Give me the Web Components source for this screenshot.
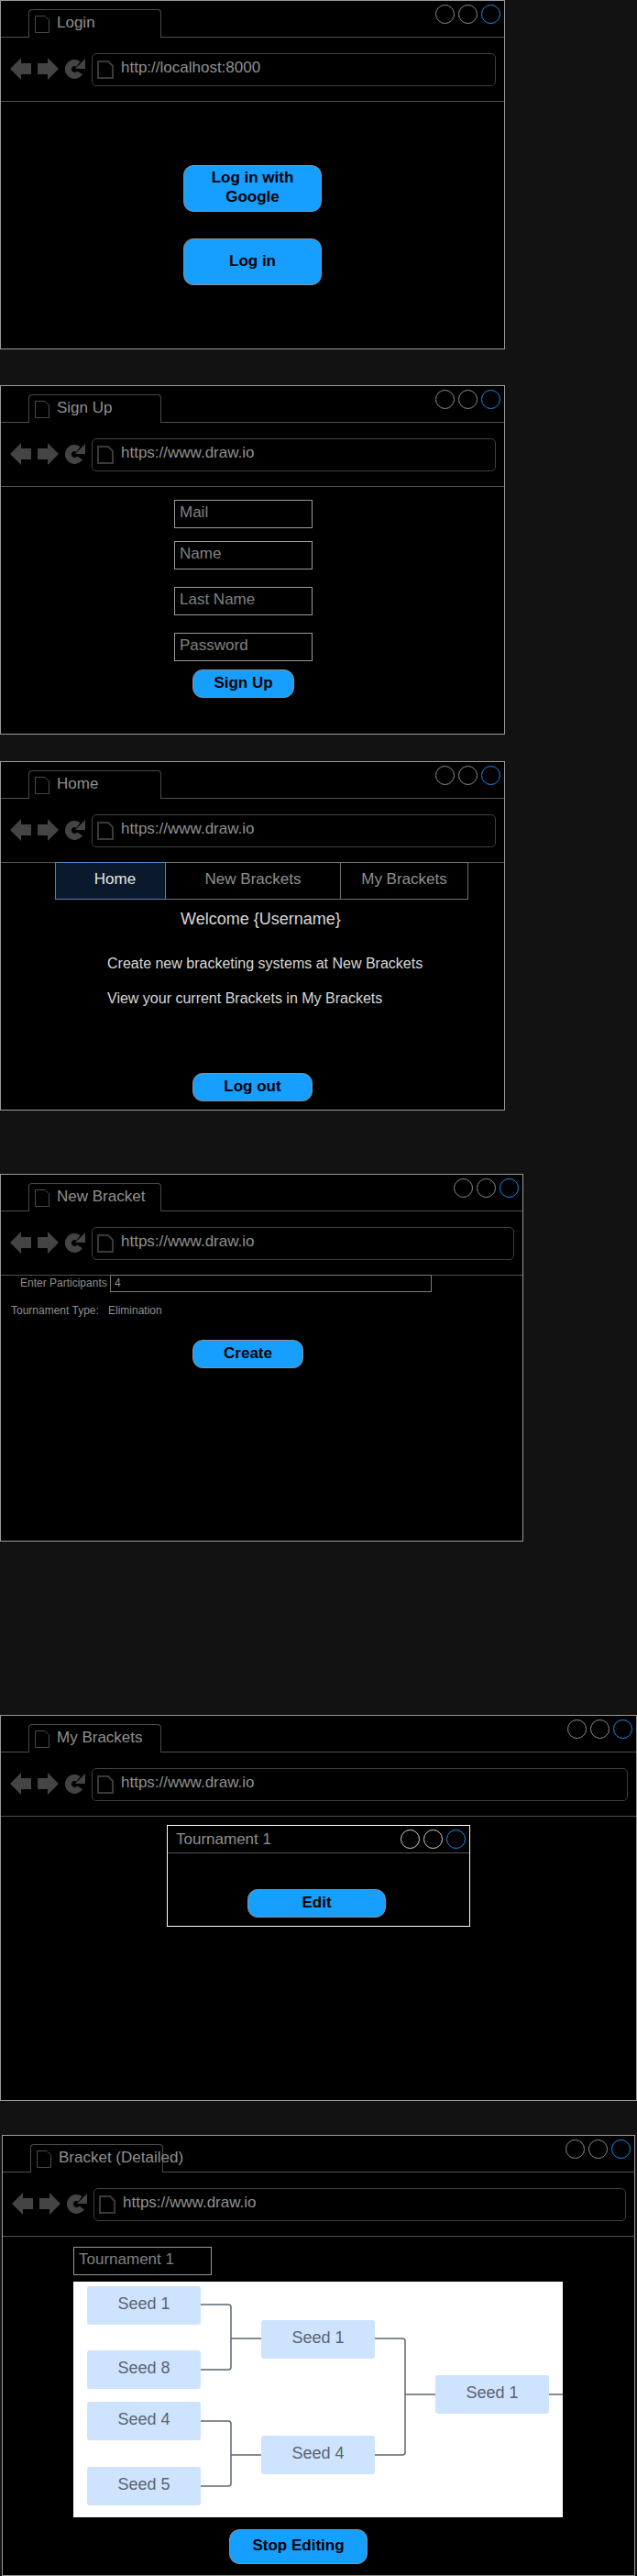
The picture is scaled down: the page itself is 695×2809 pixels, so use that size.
<!DOCTYPE html>
<html>
<head>
<meta charset="utf-8">
<title>Bracket wireframes</title>
<style>
    html, body { margin: 0; padding: 0; background: #121212; }
    body { font-family: "Liberation Sans", Arial, sans-serif; width: 695px; height: 2809px; overflow: hidden; }
    browser-window { margin-bottom: 39px; }
    #login { width: 551px; height: 381px; }
    #signup { width: 551px; height: 381px; margin-top: 39px; margin-bottom: 29px; }
    #home { width: 551px; height: 381px; margin-bottom: 69px; }
    #new-bracket { width: 571px; height: 401px; margin-bottom: 189px; }
    #my-brackets { width: 695px; height: 421px; margin-bottom: 37px; }
    #detail { width: 691px; height: 481px; margin-left: 2px; margin-bottom: 0; }
</style>
</head>
<body>

<browser-window id="login" heading="Login" url="http://localhost:8000">
    <action-button style="width:151px;height:51px;margin:69px 0 0 199px">Log in with<br>Google</action-button>
    <action-button style="width:151px;height:51px;margin:29px 0 0 199px">Log in</action-button>
</browser-window>

<browser-window id="signup" heading="Sign Up" url="https://www.draw.io">
    <text-box style="margin:14px 0 0 189px">Mail</text-box>
    <text-box style="margin:14px 0 0 189px">Name</text-box>
    <text-box style="margin:19px 0 0 189px">Last Name</text-box>
    <text-box style="margin:19px 0 0 189px">Password</text-box>
    <action-button style="width:111px;height:31px;margin:9px 0 0 209px">Sign Up</action-button>
</browser-window>

<browser-window id="home" heading="Home" url="https://www.draw.io">
    <nav-tabs style="margin:-1px 0 0 59px"></nav-tabs>
    <copy-line size="18" color="#d8d8d8" style="margin:11px 0 0 196px">Welcome {Username}</copy-line>
    <copy-line size="16" color="#d8d8d8" style="margin:29px 0 0 116px">Create new bracketing systems at New Brackets</copy-line>
    <copy-line size="16" color="#d8d8d8" style="margin:18px 0 0 116px">View your current Brackets in My Brackets</copy-line>
    <action-button style="width:131px;height:31px;margin:71px 0 0 209px">Log out</action-button>
</browser-window>

<browser-window id="new-bracket" heading="New Bracket" url="https://www.draw.io">
    <participants-row></participants-row>
    <type-row></type-row>
    <action-button style="width:121px;height:31px;margin:24px 0 0 209px">Create</action-button>
</browser-window>

<browser-window id="my-brackets" heading="My Brackets" url="https://www.draw.io">
    <tournament-card heading="Tournament 1" style="margin:9px 0 0 181px">
        <action-button style="width:151px;height:31px;margin:39px 0 0 87px">Edit</action-button>
    </tournament-card>
</browser-window>

<browser-window id="detail" heading="Bracket (Detailed)" url="https://www.draw.io">
    <text-box style="margin:11px 0 0 77px">Tournament 1</text-box>
    <bracket-chart style="margin:7px 0 0 77px"></bracket-chart>
    <action-button style="width:151px;height:38px;margin:13px 0 0 247px">Stop Editing</action-button>
</browser-window>

<script>
class WindowControls extends HTMLElement {
    constructor() {
        super();
        this.shadowDOM = this.attachShadow({ mode: "open" });
        const ring = this.getAttribute("ring") || "#8c8c8c";
        this.shadowDOM.innerHTML = `
            <style>
                :host { display: flex; gap: 4px; }
                i {
                    display: block;
                    width: 21px;
                    height: 21px;
                    box-sizing: border-box;
                    border: 1px solid ${ring};
                    border-radius: 50%;
                }
                i:last-child { border-color: #1a8cee; }
            </style>
            <i></i><i></i><i></i>`;
    }
}

class BrowserWindow extends HTMLElement {
    constructor() {
        super();
        this.shadowDOM = this.attachShadow({ mode: "open" });
        this.shadowDOM.innerHTML = `
            <style>
                :host {
                    display: block;
                    box-sizing: border-box;
                    background: #000;
                    border: 1px solid #9a9a9a;
                    font-family: "Liberation Sans", Arial, sans-serif;
                    overflow: hidden;
                }
                .tabbar {
                    display: flex;
                    box-sizing: border-box;
                    height: 40px;
                    border-bottom: 1px solid #505050;
                }
                .tab {
                    box-sizing: border-box;
                    display: flex;
                    align-items: center;
                    gap: 8px;
                    width: 145px;
                    height: 31px;
                    margin: 9px 0 -1px 30px;
                    padding: 0 0 3px 6px;
                    background: #000;
                    border: 1px solid #4a4a4a;
                    border-bottom: none;
                    border-radius: 4px 4px 0 0;
                    color: #8f8f8f;
                    font-size: 17px;
                    line-height: 20px;
                    white-space: nowrap;
                }
                .tab svg { flex: none; margin-top: 3px; }
                window-controls { margin: 4px 4px 0 auto; }
                .toolbar {
                    display: flex;
                    align-items: center;
                    box-sizing: border-box;
                    height: 70px;
                    padding: 0 9px 0 10px;
                    border-bottom: 1px solid #505050;
                }
                .nav { flex: none; margin: -1px 7px 0 0; }
                .address {
                    flex: 1;
                    display: flex;
                    align-items: center;
                    gap: 8px;
                    box-sizing: border-box;
                    height: 36px;
                    padding: 0 0 3px 5px;
                    border: 1px solid #3f3f3f;
                    border-radius: 5px;
                    color: #8f8f8f;
                    font-size: 17px;
                    white-space: nowrap;
                }
                .address svg { flex: none; margin-top: 4px; }
            </style>
            <div class="tabbar">
                <div class="tab">
                    <svg width="16" height="19" viewBox="0 0 16 19"><path d="M.5.5H11L15.5 5V18.5H.5Z" fill="none" stroke="#4a4a4a"/></svg>
                    <span>${this.getAttribute("heading")}</span>
                </div>
                <window-controls></window-controls>
            </div>
            <div class="toolbar">
                <svg class="nav" width="23" height="24" viewBox="0 0 23 24"><path d="M0 12 12 0V6H23V18H12V24Z" fill="#444"/></svg>
                <svg class="nav" width="23" height="24" viewBox="0 0 23 24"><path d="M23 12 11 0V6H0V18H11V24Z" fill="#444"/></svg>
                <svg class="nav" width="22" height="24" viewBox="0 0 22 24"><path d="M14.5 6.8A7 7 0 1 0 16.2 16.4" fill="none" stroke="#444" stroke-width="7"/><path d="M22 1V12H11Z" fill="#444"/></svg>
                <div class="address">
                    <svg width="18" height="20" viewBox="0 0 18 20"><path d="M1 1H12L17 6V19H1Z" fill="none" stroke="#3a3a3a" stroke-width="2"/></svg>
                    <span>${this.getAttribute("url")}</span>
                </div>
            </div>
            <slot></slot>`;
    }
}

class ActionButton extends HTMLElement {
    constructor() {
        super();
        this.shadowDOM = this.attachShadow({ mode: "open" });
        this.shadowDOM.innerHTML = `
            <style>
                :host {
                    display: flex;
                    align-items: center;
                    justify-content: center;
                    box-sizing: border-box;
                    padding-bottom: 3px;
                    background: #179fff;
                    border: 1px solid #8f8f8f;
                    border-radius: 11px;
                    color: #000;
                    font-size: 17px;
                    font-weight: bold;
                    line-height: 21px;
                    text-align: center;
                }
            </style>
            <div><slot></slot></div>`;
    }
}

class TextBox extends HTMLElement {
    constructor() {
        super();
        this.shadowDOM = this.attachShadow({ mode: "open" });
        this.shadowDOM.innerHTML = `
            <style>
                :host {
                    display: block;
                    box-sizing: border-box;
                    width: 151px;
                    height: 31px;
                    padding: 3px 0 0 5px;
                    border: 1px solid #9a9a9a;
                    color: #808080;
                    font-size: 17px;
                    line-height: 20px;
                    white-space: nowrap;
                }
            </style>
            <slot></slot>`;
    }
}

class CopyLine extends HTMLElement {
    constructor() {
        super();
        this.shadowDOM = this.attachShadow({ mode: "open" });
        this.shadowDOM.innerHTML = `
            <style>
                :host {
                    display: block;
                    color: ${this.getAttribute("color")};
                    font-size: ${this.getAttribute("size")}px;
                    line-height: 20px;
                    white-space: nowrap;
                }
            </style>
            <slot></slot>`;
    }
}

class NavTabs extends HTMLElement {
    constructor() {
        super();
        this.shadowDOM = this.attachShadow({ mode: "open" });
        this.shadowDOM.innerHTML = `
            <style>
                :host {
                    display: flex;
                    height: 41px;
                    width: 451px;
                    box-sizing: border-box;
                    border: 1px solid #6f6f6f;
                    color: #8f8f8f;
                    font-size: 17px;
                }
                div {
                    display: flex;
                    align-items: center;
                    justify-content: center;
                    box-sizing: border-box;
                    padding-bottom: 4px;
                    border-left: 1px solid #6f6f6f;
                }
                .on {
                    width: 121px;
                    margin: -1px 0 -1px -1px;
                    padding-left: 10px;
                    background: #0a1a2c;
                    border: 1px solid #4f82bd;
                    color: #e4e4e4;
                }
                .new { width: 190px; border-left: none; }
                .mine { flex: 1; }
            </style>
            <div class="on">Home</div>
            <div class="new">New Brackets</div>
            <div class="mine">My Brackets</div>`;
    }
}

class ParticipantsRow extends HTMLElement {
    constructor() {
        super();
        this.shadowDOM = this.attachShadow({ mode: "open" });
        this.shadowDOM.innerHTML = `
            <style>
                :host {
                    display: flex;
                    align-items: stretch;
                    height: 19px;
                    margin-top: -1px;
                    padding-left: 21px;
                    color: #8f8f8f;
                    font-size: 12px;
                    line-height: 17px;
                    white-space: nowrap;
                }
                label { width: 98px; padding-top: 1px; }
                div {
                    box-sizing: border-box;
                    width: 351px;
                    padding-left: 4px;
                    border: 1px solid #7a7a7a;
                }
            </style>
            <label>Enter Participants</label>
            <div>4</div>`;
    }
}

class TypeRow extends HTMLElement {
    constructor() {
        super();
        this.shadowDOM = this.attachShadow({ mode: "open" });
        this.shadowDOM.innerHTML = `
            <style>
                :host {
                    display: flex;
                    margin: 12px 0 0 11px;
                    color: #8f8f8f;
                    font-size: 12px;
                    line-height: 16px;
                    white-space: nowrap;
                }
                span:first-of-type { width: 106px; }
            </style>
            <span>Tournament Type:</span>
            <span>Elimination</span>`;
    }
}

class TournamentCard extends HTMLElement {
    constructor() {
        super();
        this.shadowDOM = this.attachShadow({ mode: "open" });
        this.shadowDOM.innerHTML = `
            <style>
                :host {
                    display: block;
                    box-sizing: border-box;
                    width: 331px;
                    height: 111px;
                    border: 1px solid #fff;
                }
                header {
                    display: flex;
                    justify-content: space-between;
                    box-sizing: border-box;
                    height: 30px;
                    padding: 4px 4px 0 9px;
                    border-bottom: 1px solid #505050;
                    color: #8f8f8f;
                    font-size: 17px;
                    line-height: 20px;
                }
                span { padding-top: 1px; }
            </style>
            <header>
                <span>${this.getAttribute("heading")}</span>
                <window-controls ring="#d0d0d0"></window-controls>
            </header>
            <slot></slot>`;
    }
}

class SeedBox extends HTMLElement {
    constructor() {
        super();
        this.shadowDOM = this.attachShadow({ mode: "open" });
        this.shadowDOM.innerHTML = `
            <style>
                :host {
                    position: absolute;
                    display: flex;
                    align-items: center;
                    justify-content: center;
                    box-sizing: border-box;
                    width: 124px;
                    height: 42px;
                    padding-bottom: 4px;
                    background: #cee3fd;
                    border-radius: 3px;
                    color: #5b6470;
                    font-size: 18px;
                }
            </style>
            <slot></slot>`;
    }
}

class BracketChart extends HTMLElement {
    constructor() {
        super();
        this.shadowDOM = this.attachShadow({ mode: "open" });
        // canvas coords are page coords minus (80, 2488)
        const seeds = [
            ["Seed 1", 15, 5], ["Seed 8", 15, 75], ["Seed 4", 15, 131], ["Seed 5", 15, 202],
            ["Seed 1", 205, 42], ["Seed 4", 205, 168], ["Seed 1", 395, 102]
        ];
        this.shadowDOM.innerHTML = `
            <style>
                :host {
                    display: block;
                    position: relative;
                    width: 534px;
                    height: 257px;
                    background: #fff;
                    overflow: hidden;
                }
                svg { position: absolute; left: 0; top: 0; }
                path { fill: none; stroke: #5c6670; stroke-width: 1.5; }
            </style>
            <svg width="534" height="257" viewBox="0 0 534 257">
                <path d="M138 25H169Q172 25 172 28V93Q172 96 169 96H138"/>
                <path d="M172 62H205"/>
                <path d="M138 152H169Q172 152 172 155V220Q172 223 169 223H138"/>
                <path d="M172 189H205"/>
                <path d="M328 62H359Q362 62 362 65V186Q362 189 359 189H328"/>
                <path d="M362 123H395"/>
                <path d="M518 123H534"/>
            </svg>
            ${seeds.map(s => `<seed-box style="left:${s[1]}px;top:${s[2]}px">${s[0]}</seed-box>`).join("")}`;
    }
}

customElements.define("window-controls", WindowControls);
customElements.define("browser-window", BrowserWindow);
customElements.define("action-button", ActionButton);
customElements.define("text-box", TextBox);
customElements.define("copy-line", CopyLine);
customElements.define("nav-tabs", NavTabs);
customElements.define("participants-row", ParticipantsRow);
customElements.define("type-row", TypeRow);
customElements.define("tournament-card", TournamentCard);
customElements.define("seed-box", SeedBox);
customElements.define("bracket-chart", BracketChart);
</script>
</body>
</html>
